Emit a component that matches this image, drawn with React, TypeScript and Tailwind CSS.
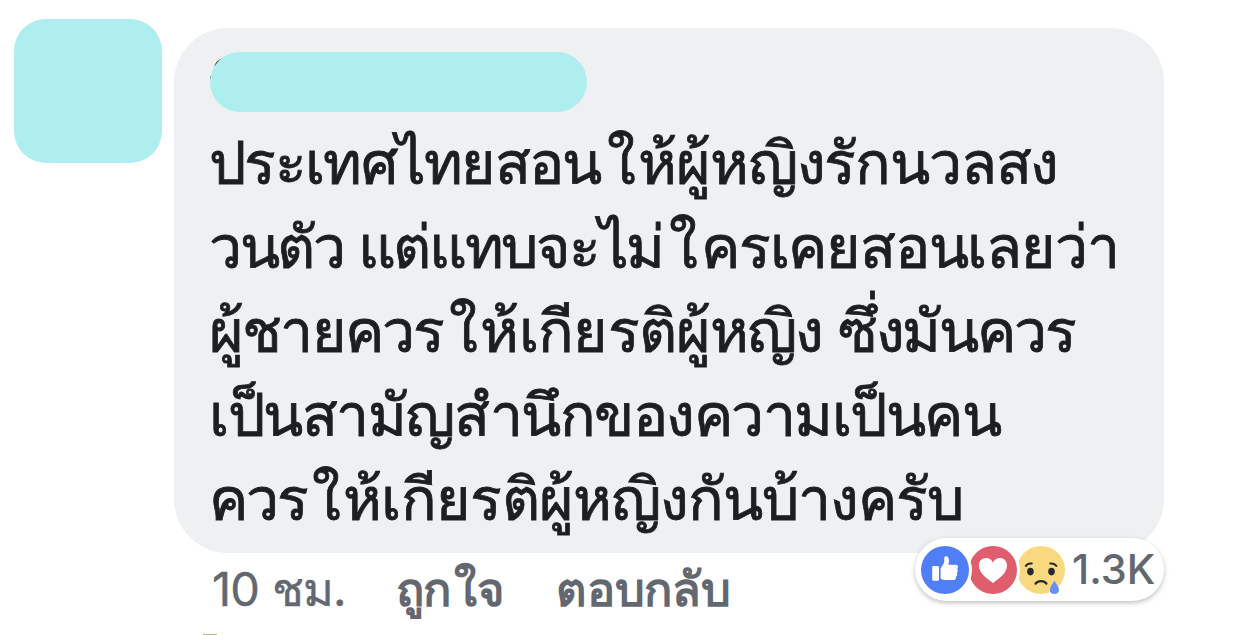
const lines = [
  [
    { text: "ประเทศไทยสอน", tracking: "tracking-[-1.7px]" },
    { text: "ใ", tracking: "ml-[6.5px] mr-[2px]" },
    { text: "ห้ผู้หญิงรักนวลสง", tracking: "tracking-[-1.15px]" },
  ],
  [
    { text: "วนตัว ", tracking: "tracking-[-2.4px]" },
    { text: "แต่แทบจะไม่", tracking: "tracking-[-2.3px]" },
    { text: "ใ", tracking: "ml-[6px] mr-[3px]" },
    { text: "ครเคยสอนเลยว่า", tracking: "tracking-[-1.2px]" },
  ],
  [
    { text: "ผู้ชายควร", tracking: "tracking-[-1.8px]" },
    { text: "ใ", tracking: "ml-[6px] mr-[2px]" },
    { text: "ห้เกียรติ", tracking: "tracking-[-0.7px]" },
    { text: "ผู้หญิง ", tracking: "tracking-[-1.6px]" },
    { text: "ซึ่งมันควร", tracking: "tracking-[-2.2px]" },
  ],
  [{ text: "เป็นสามัญสำนึกของความเป็นคน", tracking: "tracking-[-1.5px]" }],
  [
    { text: "ควร", tracking: "tracking-[-2px]" },
    { text: "ใ", tracking: "ml-[5px] mr-[2px]" },
    { text: "ห้เกียรติ", tracking: "tracking-[-0.7px]" },
    { text: "ผู้หญิงกันบ้างครับ", tracking: "tracking-[-1px]" },
  ],
]

function ReactionIcons() {
  return (
    <svg width="144" height="48" viewBox="0 0 144 48" className="shrink-0">
      {/* Sad */}
      <circle cx="120" cy="24" r="24" fill="#f9d980" />
      <g fill="#26282c">
        <ellipse cx="109.4" cy="25.6" rx="3.3" ry="3.8" />
        <ellipse cx="130.5" cy="25.6" rx="3.3" ry="3.8" />
      </g>
      <g fill="none" stroke="#26282c" strokeWidth="2" strokeLinecap="round">
        <path d="M104.8 20Q106.5 17 110.8 17.5" />
        <path d="M129.2 17.5Q133.4 17 135.4 20" />
        <path strokeWidth="2.3" d="M114.6 37.6C116.8 34.2 123.2 34.2 125.4 37.6" />
      </g>
      <path d="M133.4 34.2C135 38.2 138 40.6 138 44C138 46.5 136 48 133.4 48S128.9 46.5 128.9 44C128.9 40.6 131.8 38.2 133.4 34.2Z" fill="#6592f6" />

      {/* Love */}
      <circle cx="72" cy="24" r="27" fill="#fff" />
      <circle cx="72" cy="24" r="24" fill="#df5d6c" />
      <path d="M72 37.2C69.5 34.4 57.9 28.5 57.9 19.4C57.9 15 61 12 65 12C68.3 12 70.8 13.8 72 16.6C73.2 13.8 75.7 12 79 12C83 12 86 15 86 19.4C86 28.5 74.5 34.4 72 37.2Z" fill="#fff" />

      {/* Like */}
      <circle cx="24" cy="24" r="27" fill="#fff" />
      <circle cx="24" cy="24" r="24" fill="#4f7ef7" />
      <rect x="11.2" y="20" width="6.8" height="14.8" rx="1.4" fill="#fff" />
      <path d="M19.6 32.3V23.5C19.6 20.5 23.5 18.6 23.3 14.5V12C23.3 9.6 26.8 9.4 27.7 12.2C28.4 14.6 27.7 17 27.2 18.8H34.8C37.3 18.8 37.8 21.8 36.1 23C37.3 24.2 37.1 26 35.8 27C36.7 28.3 36.2 30 34.9 30.7C35.4 32.5 34.4 34 32.5 34H23.5C21.5 34 20.6 33.4 19.6 32.3Z" fill="#fff" />
    </svg>
  )
}

export default function App() {
  return (
    <div className="relative flex h-[635px] w-[1242px] items-start overflow-hidden bg-white pl-3.5 font-['Inter','Liberation_Sans',sans-serif]">
      <div className="mt-[19px] h-[144px] w-[148px] shrink-0 rounded-[32px] bg-[#afeeee]" />

      <div className="ml-3 w-[990px] pt-7">
        <div className="relative h-[525px] rounded-[54px] bg-[#eff0f2] pt-6 pl-9">
          <svg width="16" height="24" className="absolute top-[29px] left-9" fill="none" stroke="#303236">
            <path d="M5 9Q7 4 12 2.5" strokeWidth="1.4" />
            <path d="M.6 22V19" strokeWidth=".8" />
          </svg>
          <div className="relative h-[60px] w-[377px] rounded-full bg-[#afeeee]" />
          <div className="mt-[9px] -ml-px text-[59px] leading-[84px] text-[#1c1e21] [-webkit-text-stroke:0.8px_#1c1e21]">
            {lines.map((line, i) => (
              <p key={i} className="whitespace-nowrap">
                {line.map((part) => (
                  <span key={part.text} className={part.tracking}>{part.text}</span>
                ))}
              </p>
            ))}
          </div>

          <div className="absolute top-[510px] right-0 flex h-[63px] w-[249px] items-center rounded-full bg-white pl-1.5 shadow-[0_2px_5px_rgba(0,0,0,0.25)]">
            <ReactionIcons />
            <span className="ml-[7px] text-[41.5px] leading-none font-medium text-[#636770]">1.3K</span>
          </div>
        </div>

        <div className="-mt-px flex pl-[38px] text-[47px] leading-[74px] whitespace-nowrap text-[#636770]">
          <span className="w-[184px] tracking-[-0.8px] [-webkit-text-stroke:0.4px_#636770]">10 ชม.</span>
          <span className="w-[160px] font-bold tracking-[-0.8px]">
            ถูก<span className="ml-1">ใ</span>จ
          </span>
          <span className="font-bold tracking-[-0.2px]">ตอบกลับ</span>
        </div>
      </div>
      <div className="absolute top-[634px] left-[203px] h-px w-3.5 bg-[#b5b68b]" />
    </div>
  )
}
